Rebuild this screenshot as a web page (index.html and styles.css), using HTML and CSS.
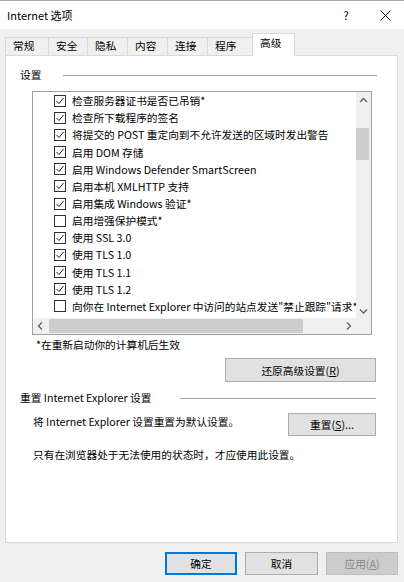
FILE: index.html
```html
<!DOCTYPE html>
<html lang="zh-CN">
<head>
<meta charset="utf-8">
<title>Internet 选项</title>
<link rel="stylesheet" href="styles.css">
</head>
<body>
<div class="window">
  <div class="titlebar">
    <span class="title">Internet 选项</span>
    <span class="help">?</span>
    <span class="close"><svg width="11" height="11" viewBox="0 0 11 11"><path d="M0.5 0.5 L10.5 10.5 M10.5 0.5 L0.5 10.5" stroke="#000" stroke-width="1" fill="none"/></svg></span>
  </div>
  <div class="tabs">
    <div class="tab t1">常规</div>
    <div class="tab t2">安全</div>
    <div class="tab t3">隐私</div>
    <div class="tab t4">内容</div>
    <div class="tab t5">连接</div>
    <div class="tab t6">程序</div>
    <div class="tab active">高级</div>
  </div>
  <div class="panel">
    <div class="ghead g1"><span class="glabel">设置</span><i class="rule"></i></div>
    <div class="listbox">
      <div class="items">
        <div class="row"><span class="cb on"><svg width="10" height="10" viewBox="0 0 10 10"><path d="M1.5 5 L4 7.5 L8.5 2" fill="none" stroke="#222" stroke-width="1"/></svg></span>检查服务器证书是否已吊销*</div>
        <div class="row"><span class="cb on"><svg width="10" height="10" viewBox="0 0 10 10"><path d="M1.5 5 L4 7.5 L8.5 2" fill="none" stroke="#222" stroke-width="1"/></svg></span>检查所下载程序的签名</div>
        <div class="row"><span class="cb on"><svg width="10" height="10" viewBox="0 0 10 10"><path d="M1.5 5 L4 7.5 L8.5 2" fill="none" stroke="#222" stroke-width="1"/></svg></span>将提交的 POST 重定向到不允许发送的区域时发出警告</div>
        <div class="row"><span class="cb on"><svg width="10" height="10" viewBox="0 0 10 10"><path d="M1.5 5 L4 7.5 L8.5 2" fill="none" stroke="#222" stroke-width="1"/></svg></span>启用 DOM 存储</div>
        <div class="row"><span class="cb on"><svg width="10" height="10" viewBox="0 0 10 10"><path d="M1.5 5 L4 7.5 L8.5 2" fill="none" stroke="#222" stroke-width="1"/></svg></span>启用 Windows Defender SmartScreen</div>
        <div class="row"><span class="cb on"><svg width="10" height="10" viewBox="0 0 10 10"><path d="M1.5 5 L4 7.5 L8.5 2" fill="none" stroke="#222" stroke-width="1"/></svg></span>启用本机 XMLHTTP 支持</div>
        <div class="row"><span class="cb on"><svg width="10" height="10" viewBox="0 0 10 10"><path d="M1.5 5 L4 7.5 L8.5 2" fill="none" stroke="#222" stroke-width="1"/></svg></span>启用集成 Windows 验证*</div>
        <div class="row"><span class="cb"></span>启用增强保护模式*</div>
        <div class="row"><span class="cb on"><svg width="10" height="10" viewBox="0 0 10 10"><path d="M1.5 5 L4 7.5 L8.5 2" fill="none" stroke="#222" stroke-width="1"/></svg></span>使用 SSL 3.0</div>
        <div class="row"><span class="cb on"><svg width="10" height="10" viewBox="0 0 10 10"><path d="M1.5 5 L4 7.5 L8.5 2" fill="none" stroke="#222" stroke-width="1"/></svg></span>使用 TLS 1.0</div>
        <div class="row"><span class="cb on"><svg width="10" height="10" viewBox="0 0 10 10"><path d="M1.5 5 L4 7.5 L8.5 2" fill="none" stroke="#222" stroke-width="1"/></svg></span>使用 TLS 1.1</div>
        <div class="row"><span class="cb on"><svg width="10" height="10" viewBox="0 0 10 10"><path d="M1.5 5 L4 7.5 L8.5 2" fill="none" stroke="#222" stroke-width="1"/></svg></span>使用 TLS 1.2</div>
        <div class="row"><span class="cb"></span>向你在 Internet Explorer 中访问的站点发送"禁止跟踪"请求*</div>
        <div class="row"><span class="cb"></span>允许活动内容在我的计算机上的文件中运行*</div>
      </div>
      <div class="vscroll">
        <div class="arrow up"><svg width="15" height="16" viewBox="0 0 15 16"><path d="M4 10 L7.5 6.5 L11 10" fill="none" stroke="#606060" stroke-width="1.3"/></svg></div>
        <div class="vthumb"></div>
        <div class="vfill"></div>
        <div class="arrow down"><svg width="15" height="14" viewBox="0 0 15 14"><path d="M4 5.5 L7.5 9 L11 5.5" fill="none" stroke="#606060" stroke-width="1.3"/></svg></div>
      </div>
      <div class="hscroll">
        <div class="harrow"><svg width="15" height="16" viewBox="0 0 15 16"><path d="M9 4.5 L5.5 8 L9 11.5" fill="none" stroke="#606060" stroke-width="1.3"/></svg></div>
        <div class="hthumb"></div>
        <div class="hfill"></div>
        <div class="harrow"><svg width="15" height="16" viewBox="0 0 15 16"><path d="M6 4.5 L9.5 8 L6 11.5" fill="none" stroke="#606060" stroke-width="1.3"/></svg></div>
      </div>
      <div class="corner"></div>
    </div>
    <div class="note">*在重新启动你的计算机后生效</div>
    <div class="restore-row"><button class="btn wide">还原高级设置(<u>R</u>)</button></div>
    <div class="ghead g2"><span class="glabel">重置 Internet Explorer 设置</span><i class="rule"></i></div>
    <div class="reset-row"><span class="reset-text">将 Internet Explorer 设置重置为默认设置。</span><button class="btn reset">重置(<u>S</u>)...</button></div>
    <div class="hint">只有在浏览器处于无法使用的状态时，才应使用此设置。</div>
  </div>
  <div class="footer">
    <button class="btn fbtn default">确定</button>
    <button class="btn fbtn cancel">取消</button>
    <button class="btn fbtn disabled">应用(<u>A</u>)</button>
  </div>
</div>
</body>
</html>
```
FILE: styles.css
```css
* { box-sizing: border-box; }
html, body { margin: 0; padding: 0; }
body {
  background: #f0f0f0;
  font-family: "Noto Sans CJK SC", "Noto Sans", sans-serif;
  font-size: 10.7px;
  color: #000;
}
.window {
  width: 404px;
  height: 582px;
  border-top: 1px solid #a9a9a9;
  display: flex;
  flex-direction: column;
  overflow: hidden;
}
.titlebar {
  height: 28px;
  flex: none;
  background: #fff;
  display: flex;
  align-items: center;
  padding-left: 7px;
}
.title { flex: 1; font-size: 11px; }
.help { width: 40px; text-align: center; font-size: 11.5px; }
.close { width: 38px; display: flex; justify-content: center; align-items: center; }
.close svg { display: block; }

.tabs {
  height: 26px;
  flex: none;
  display: flex;
  align-items: flex-end;
  padding-left: 5px;
  position: relative;
  z-index: 2;
}
.tab {
  height: 18px;
  border: 1px solid #d9d9d9;
  border-bottom: none;
  border-right: none;
  background: #f0f0f0;
  padding-left: 7px;
  line-height: 16px;
  white-space: nowrap;
}
.t1 { width: 43px; }
.t2 { width: 39px; }
.t3 { width: 40px; }
.t4 { width: 40px; }
.t5 { width: 40px; }
.t6 { width: 45px; }
.tab.active {
  width: 43px;
  height: 23px;
  margin-bottom: -1px;
  background: #fff;
  border-right: 1px solid #d9d9d9;
  line-height: 18px;
}

.panel {
  flex: none;
  margin-left: 5px;
  width: 393px;
  height: 488px;
  background: #fff;
  border: 1px solid #d9d9d9;
  display: flex;
  flex-direction: column;
  position: relative;
  z-index: 1;
}
.ghead {
  height: 14px;
  display: flex;
  align-items: center;
  padding-left: 14px;
  white-space: nowrap;
}
.glabel { flex: 1; line-height: 14px; }
.rule { display: block; height: 1px; background: #a0a0a0; }
.g1 { margin-top: 12px; }
.g1 .rule { width: 314px; margin-right: 20px; }
.g2 { margin-top: 9px; }
.g2 .rule { width: 196px; margin-right: 21px; }

.listbox {
  margin: 9px 0 0 26px;
  width: 340px;
  height: 244px;
  border: 1px solid #a0a0a0;
  display: grid;
  grid-template-columns: 323px 15px;
  grid-template-rows: 226px 16px;
}
.items {
  overflow: hidden;
  padding-left: 21px;
}
.row {
  height: 17.17px;
  display: flex;
  align-items: center;
  white-space: nowrap;
}
.cb {
  width: 12px;
  height: 12px;
  flex: none;
  border: 1px solid #333;
  margin-right: 6px;
  display: flex;
  align-items: center;
  justify-content: center;
  background: #fff;
}
.cb svg { display: block; }

.vscroll {
  background: #f0f0f0;
  display: flex;
  flex-direction: column;
}
.arrow { flex: none; }
.arrow svg { display: block; }
.up { height: 16px; }
.vthumb {
  margin-top: 20px;
  height: 32px;
  margin-right: 2px;
  background: #cdcdcd;
}
.vfill { flex: 1; }
.down { height: 14px; }

.hscroll {
  background: #f0f0f0;
  display: flex;
}
.harrow { flex: none; width: 15px; }
.harrow svg { display: block; }
.hthumb {
  margin-left: 1px;
  width: 254px;
  margin-top: 1px;
  margin-bottom: 1px;
  background: #cdcdcd;
}
.hfill { flex: 1; }
.corner { background: #f0f0f0; }

.note {
  margin-top: 3px;
  height: 14px;
  line-height: 14px;
  padding-left: 30px;
}
.restore-row {
  margin-top: 6px;
  display: flex;
  justify-content: flex-end;
  padding-right: 21px;
}
.btn {
  font: inherit;
  color: #000;
  background: #e1e1e1;
  border: 1px solid #adadad;
  padding: 0;
  margin: 0;
  display: flex;
  align-items: center;
  justify-content: center;
  white-space: nowrap;
}
.btn u { text-underline-offset: 1px; }
.wide { width: 151px; height: 24px; }
.reset-row {
  margin-top: 8px;
  height: 23px;
  display: flex;
  align-items: flex-start;
  padding-left: 27px;
  padding-right: 21px;
}
.reset-text { flex: 1; line-height: 18px; white-space: nowrap; }
.reset { width: 88px; height: 23px; }
.hint {
  margin-top: 12px;
  height: 14px;
  line-height: 14px;
  padding-left: 27px;
}

.footer {
  flex: none;
  margin-top: 9px;
  display: flex;
  justify-content: flex-end;
  gap: 8px;
  padding-right: 6px;
}
.fbtn { width: 72px; height: 23px; }
.cancel { width: 73px; }
.default { border: 2px solid #0078d7; }
.disabled { background: #cccccc; border-color: #bfbfbf; color: #8a8a8a; }
```
